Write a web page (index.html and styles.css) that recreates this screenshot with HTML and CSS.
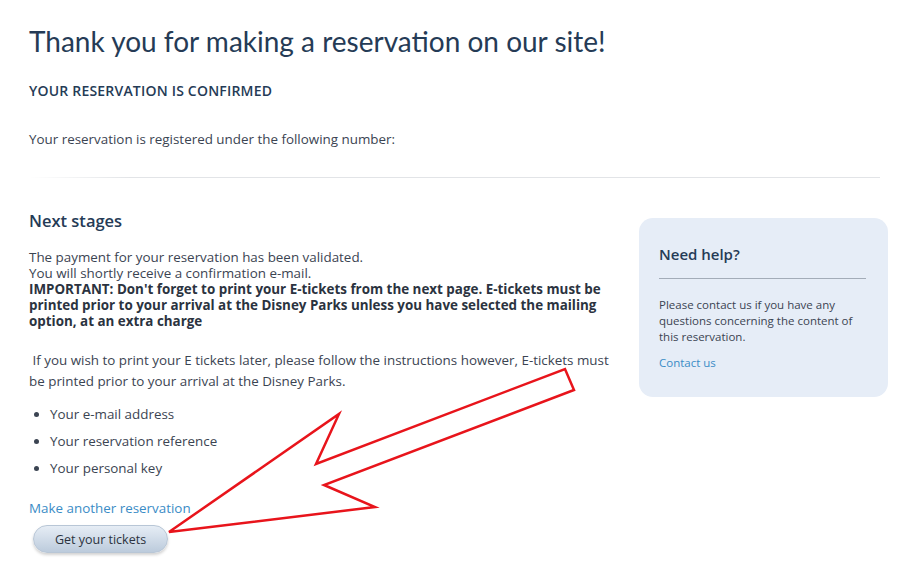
FILE: index.html
```html
<html>

<head>
    <title>Reservation confirmed</title>
    <link rel="stylesheet" href="styles.css">
</head>

<body>

    <div class="page">
        <h1 class="title">Thank you for making a reservation on our site!</h1>

        <h3 class="confirmed">YOUR RESERVATION IS CONFIRMED</h3>

        <p class="number">Your reservation is registered under the following number:</p>

        <div class="separator"></div>

        <div class="columns">
            <div class="main">
                <h2 class="stages">Next stages</h2>

                <p class="payment">
                    The payment for your reservation has been validated.<br>
                    You will shortly receive a confirmation e-mail.<br>
                    <b>IMPORTANT: Don't forget to print your E-tickets from the next page. E-tickets must be
                        printed prior to your arrival at the Disney Parks unless you have selected the mailing
                        option, at an extra charge</b>
                </p>

                <p class="later">&nbsp;If you wish to print your E tickets later, please follow the instructions
                    however, E-tickets must be printed prior to your arrival at the Disney Parks.</p>

                <ul class="needs">
                    <li>Your e-mail address</li>
                    <li>Your reservation reference</li>
                    <li>Your personal key</li>
                </ul>

                <a class="link another" href="#">Make another reservation</a>

                <button class="tickets">Get your tickets</button>
            </div>

            <div class="side">
                <div class="help">
                    <h4>Need help?</h4>
                    <hr>
                    <p>Please contact us if you have any questions concerning the content of this reservation.</p>
                    <a class="link" href="#">Contact us</a>
                </div>
            </div>
        </div>

        <svg class="arrow" width="913" height="572" viewBox="0 0 913 572">
            <polygon points="169,532 339,414 316,464 565,369 574,390 324,485 375,507"
                fill="none" stroke="#e8141b" stroke-width="2.5" stroke-linejoin="miter" />
        </svg>
    </div>

</body>

</html>
```

FILE: styles.css
```css
body {
    margin: 0;
    font-family: "Open Sans", "Noto Sans", sans-serif;
    color: #3b4452;
    background: #fff;
}

.page {
    position: relative;
    padding: 22px 25px 0 29px;
}

.title {
    margin: 0;
    font-family: Lato, "Open Sans", sans-serif;
    font-size: 28px;
    font-weight: 400;
    color: #253b56;
    line-height: 38px;
}

.confirmed {
    margin: 21px 0 0;
    font-size: 14px;
    font-weight: 600;
    letter-spacing: 0.2px;
    color: #253b56;
    line-height: 20px;
}

.number {
    margin: 29px 0 0;
    font-size: 13.4px;
    line-height: 18px;
}

.separator {
    height: 1px;
    margin: 29px 8px 0 0;
    background: linear-gradient(to right, #fff, #e2e4e7 12%, #e2e4e7);
}

.columns {
    display: flex;
    gap: 26px;
    margin-top: 32px;
}

.main {
    width: 584px;
}

.stages {
    margin: 0;
    font-size: 16.5px;
    font-weight: 600;
    color: #253b56;
    line-height: 22px;
}

.payment {
    margin: 17px 0 0;
    font-size: 13.4px;
    line-height: 16px;
}

.payment b {
    font-weight: 700;
    color: #2b3340;
}

.later {
    margin: 21px 0 0;
    font-size: 13.4px;
    line-height: 21px;
}

.needs {
    margin: 9px 0 0;
    padding-left: 21px;
    font-size: 13.4px;
    line-height: 27px;
}

.link {
    color: #3a8cc6;
    text-decoration: none;
    font-size: 13.4px;
}

.another {
    display: block;
    margin-top: 17px;
    line-height: 18px;
}

.tickets {
    display: block;
    margin: 8px 0 0 4px;
    width: 135px;
    height: 28px;
    border: 1px solid #b8c6d6;
    border-radius: 14px;
    background: linear-gradient(#e6edf5, #bccbdc);
    box-shadow: 0 2px 3px rgba(0, 0, 0, 0.18);
    font-family: "Open Sans", "Noto Sans", sans-serif;
    font-size: 12.5px;
    color: #2b3340;
}

.side {
    width: 249px;
    flex-shrink: 0;
    padding-top: 8px;
}

.help {
    background: #e6edf7;
    border-radius: 14px;
    padding: 26px 20px 27px 20px;
}

.help h4 {
    margin: 0;
    font-size: 15px;
    font-weight: 600;
    color: #253b56;
    line-height: 20px;
}

.help hr {
    border: none;
    height: 1px;
    background: #a3acb8;
    margin: 14px 2px 18px 0;
}

.help p {
    margin: 0;
    font-size: 11.5px;
    line-height: 16px;
}

.help .link {
    display: block;
    margin-top: 10px;
    font-size: 11.5px;
}

.arrow {
    position: absolute;
    left: 0;
    top: 0;
    pointer-events: none;
}
```
